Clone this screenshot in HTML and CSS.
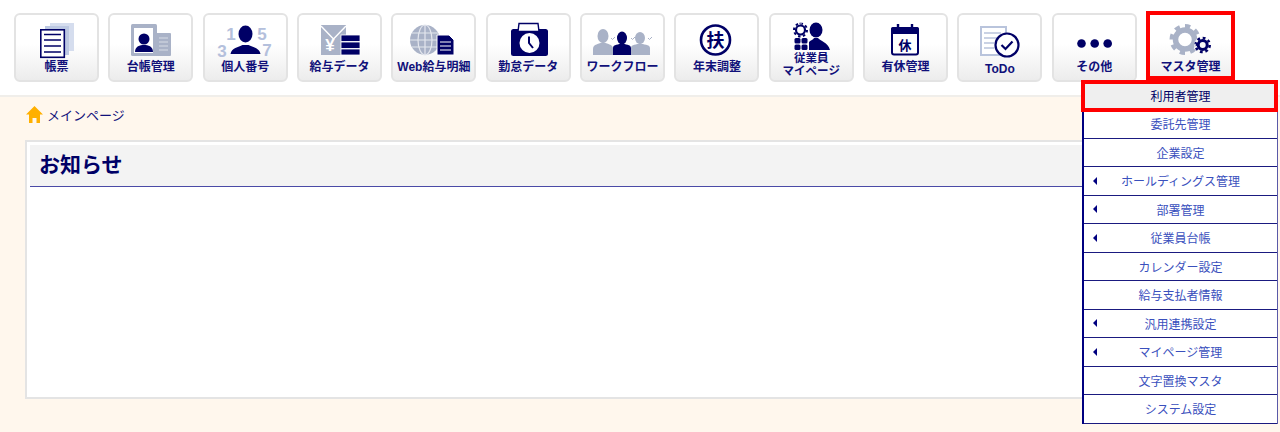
FILE: index.html
```html
<!DOCTYPE html>
<html lang="ja">
<head>
  <meta charset="UTF-8" />
  <meta name="viewport" content="width=device-width, initial-scale=1.0"/>
  <title>メインページ</title>
  <link rel="stylesheet" href="styles.css">
</head>
<body>

  <header class="topbar">
    <a class="nav-btn">
      <svg class="nav-icon" viewBox="0 0 85 46">
        <rect x="36" y="10" width="24" height="28" fill="#d5ddee"/>
        <rect x="31" y="13" width="24" height="29" fill="#bcc8e2"/>
        <rect x="26.800" y="16.800" width="23.500" height="27.500" fill="#fff" stroke="#000066" stroke-width="1.600"/>
        <path d="M30 21.500h17M30 27h17M30 33h17M30 39h17" stroke="#000066" stroke-width="1.600"/>
      </svg>
      <span class="nav-label">帳票</span>
    </a>
    <a class="nav-btn">
      <svg class="nav-icon" viewBox="0 0 85 46">
        <rect x="47" y="20" width="16" height="23" rx="1" fill="#a9b2c7"/>
        <rect x="23" y="11" width="26" height="32" rx="1.500" fill="#a9b2c7"/>
        <rect x="26" y="15" width="19" height="25" fill="#fff"/>
        <circle cx="36" cy="26" r="5.500" fill="#000066"/>
        <path d="M27 39c0-6 5-7 9-7s9 1 9 7z" fill="#000066"/>
        <path d="M51 25h9M51 29h9M51 33h9M51 37h9" stroke="#d7dce6" stroke-width="1.200"/>
      </svg>
      <span class="nav-label">台帳管理</span>
    </a>
    <a class="nav-btn">
      <svg class="nav-icon" viewBox="0 0 85 46">
        <ellipse cx="42.500" cy="21" rx="7" ry="8.500" fill="#000066"/>
        <path d="M27.500 41c1-6 8-7 12-9h6c4 2 11 3 12 9z" fill="#000066"/>
        <g class="digit">
          <text x="28" y="27">1</text>
          <text x="59" y="27">5</text>
          <text x="19" y="43.500">3</text>
          <text x="64" y="43">7</text>
        </g>
      </svg>
      <span class="nav-label">個人番号</span>
    </a>
    <a class="nav-btn">
      <svg class="nav-icon" viewBox="0 0 85 46">
        <rect x="24" y="12" width="25" height="30" fill="#a9b2c7"/>
        <path d="M24 13l12.500 13L49 13" fill="none" stroke="#fff" stroke-width="1.400"/>
        <text class="yen" x="33" y="38">¥</text>
        <g fill="#000066" stroke="#fff" stroke-width=".8">
          <rect x="44" y="22" width="19" height="6.500"/>
          <rect x="44" y="29" width="19" height="6.500"/>
          <rect x="44" y="36" width="19" height="6"/>
        </g>
      </svg>
      <span class="nav-label">給与データ</span>
    </a>
    <a class="nav-btn">
      <svg class="nav-icon" viewBox="0 0 85 46">
        <circle cx="34" cy="27" r="15" fill="#a9b2c7"/>
        <g fill="none" stroke="#e4e7ee" stroke-width="1.200">
          <ellipse cx="34" cy="27" rx="7" ry="15"/>
          <path d="M34 12v30M19 27h30M21 20h26M21 34h26"/>
        </g>
        <path d="M46 22h12l5 5v15H46z" fill="#000066" stroke="#fff"/>
        <path d="M49 29h11M49 33h11M49 37h11" stroke="#fff"/>
      </svg>
      <span class="nav-label">Web給与明細</span>
    </a>
    <a class="nav-btn">
      <svg class="nav-icon" viewBox="0 0 85 46">
        <rect x="25" y="16" width="37" height="27" rx="2.500" fill="#000066"/>
        <path d="M33 10.500h19l1 8H32z" fill="#fff" stroke="#000066" stroke-width="1.400"/>
        <circle cx="43.500" cy="30" r="10" fill="#fff"/>
        <path d="M43 23.500V30l4 5" fill="none" stroke="#000066" stroke-width="2"/>
      </svg>
      <span class="nav-label">勤怠データ</span>
    </a>
    <a class="nav-btn">
      <svg class="nav-icon" viewBox="0 0 85 46">
        <g fill="#a9b2c7">
          <ellipse cx="23" cy="23" rx="5.500" ry="7"/>
          <path d="M13 42v-6c0-5 6-5 10-7 4 2 10 2 10 7v6z"/>
          <ellipse cx="60" cy="25" rx="5" ry="6"/>
          <path d="M51 42v-7c0-4 6-3 9-5 3 2 10 1 10 5v7z"/>
        </g>
        <ellipse cx="42" cy="25" rx="5" ry="6.500" fill="#000066"/>
        <path d="M33 42v-7c0-4 6-3 9-5 3 2 9 1 9 5v7z" fill="#000066"/>
        <path d="M31 25l1.500 1.500 2.500-2.500M51 25l1.500 1.500 2.500-2.500M68 25l1.500 1.500 2.500-2.500" fill="none" stroke="#a9b2c7"/>
      </svg>
      <span class="nav-label">ワークフロー</span>
    </a>
    <a class="nav-btn">
      <svg class="nav-icon" viewBox="0 0 85 46">
        <circle cx="41.500" cy="27" r="14.500" fill="#fff" stroke="#000066" stroke-width="2.600"/>
        <text class="kanji" x="41.500" y="33.500" font-size="18">扶</text>
      </svg>
      <span class="nav-label">年末調整</span>
    </a>
    <a class="nav-btn nav-btn-tall">
      <svg class="nav-icon" viewBox="0 0 85 39">
        <circle cx="31.500" cy="17" r="4.500" fill="none" stroke="#000066" stroke-width="2.200"/>
        <circle cx="31.500" cy="17" r="6.500" fill="none" stroke="#000066" stroke-width="2" pathLength="16" stroke-dasharray="1 1"/>
        <g fill="#000066">
          <rect x="25.500" y="25" width="6" height="5.500" rx="1.500"/>
          <rect x="32.500" y="25" width="6" height="5.500" rx="1.500"/>
          <rect x="25.500" y="31.500" width="6" height="5.500" rx="1.500"/>
          <rect x="32.500" y="31.500" width="6" height="5.500" rx="1.500"/>
          <ellipse cx="47" cy="17" rx="6.500" ry="7.500"/>
          <path d="M40 37V29c2-2 4-2 5-4h4c2 3 10 4 12 12z"/>
        </g>
      </svg>
      <span class="nav-label nav-label-small">従業員<br>マイページ</span>
    </a>
    <a class="nav-btn">
      <svg class="nav-icon" viewBox="0 0 85 46">
        <rect x="29" y="15" width="26" height="26.500" rx="2" fill="#fff" stroke="#000066" stroke-width="2"/>
        <path d="M28 21v-5a2 2 0 0 1 2-2h24a2 2 0 0 1 2 2v5z" fill="#000066"/>
        <path d="M35 11v5M49 11v5" stroke="#000066" stroke-width="2.400"/>
        <text class="kanji" x="42" y="37" font-size="13">休</text>
      </svg>
      <span class="nav-label">有休管理</span>
    </a>
    <a class="nav-btn">
      <svg class="nav-icon" viewBox="0 0 85 46">
        <rect x="24" y="14" width="25" height="28" fill="#fff" stroke="#b9c4dc" stroke-width="2"/>
        <path d="M27 20h17M27 25h14M27 30h10M27 35h10" stroke="#b9c4dc" stroke-width="1.600"/>
        <circle cx="50" cy="32" r="11.500" fill="#fff" stroke="#000066" stroke-width="2.200"/>
        <path d="M44.500 32l4 4 7-7.500" fill="none" stroke="#000066" stroke-width="2.200"/>
      </svg>
      <span class="nav-label nav-label-low">ToDo</span>
    </a>
    <a class="nav-btn">
      <svg class="nav-icon" viewBox="0 0 85 46">
        <g fill="#000066">
          <circle cx="29.500" cy="30.500" r="4.300"/>
          <circle cx="42.700" cy="30.500" r="4.300"/>
          <circle cx="55.700" cy="30.500" r="4.300"/>
        </g>
      </svg>
      <span class="nav-label">その他</span>
    </a>
    <a class="nav-btn nav-btn-marked">
      <svg class="nav-icon" viewBox="0 0 81 44">
        <circle cx="35" cy="24.500" r="9.500" fill="none" stroke="#a9b2c7" stroke-width="5.500"/>
        <circle cx="35" cy="24.500" r="13.500" fill="none" stroke="#a9b2c7" stroke-width="4" pathLength="16" stroke-dasharray="1 1"/>
        <circle cx="52.700" cy="30" r="8.500" fill="#f9f9f9"/>
        <circle cx="52.700" cy="30" r="4.500" fill="none" stroke="#000066" stroke-width="3"/>
        <circle cx="52.700" cy="30" r="7" fill="none" stroke="#000066" stroke-width="2.600" pathLength="16" stroke-dasharray="1 1"/>
      </svg>
      <span class="nav-label">マスタ管理</span>
    </a>
  </header>

  <ul class="menu">
    <li class="menu-item menu-item-marked">利用者管理</li>
    <li class="menu-item">委託先管理</li>
    <li class="menu-item">企業設定</li>
    <li class="menu-item has-sub">ホールディングス管理</li>
    <li class="menu-item has-sub">部署管理</li>
    <li class="menu-item has-sub">従業員台帳</li>
    <li class="menu-item">カレンダー設定</li>
    <li class="menu-item">給与支払者情報</li>
    <li class="menu-item has-sub">汎用連携設定</li>
    <li class="menu-item has-sub">マイページ管理</li>
    <li class="menu-item">文字置換マスタ</li>
    <li class="menu-item">システム設定</li>
  </ul>

  <main class="content">
    <div class="breadcrumb">
      <svg class="home-icon" viewBox="0 0 17 17">
        <path d="M8.500 0L17 8.500h-3V17h-3.500v-5h-4v5H3V8.500H0z" fill="#ffb000"/>
      </svg>
      <span>メインページ</span>
    </div>

    <section class="panel">
      <h2 class="panel-title">お知らせ</h2>
    </section>
  </main>

</body>
</html>
```

FILE: styles.css
```css
* { box-sizing: border-box; }

body {
  margin: 0;
  min-height: 100vh;
  display: flex;
  flex-direction: column;
  font-family: 'Liberation Sans', 'Noto Sans CJK JP', sans-serif;
  background: #fff7ed;
  color: #000066;
}

.topbar {
  height: 97px;
  padding: 13px 0 0 14px;
  display: flex;
  align-items: flex-start;
  gap: 9.35px;
  background: #fff;
  border-bottom: 2px solid #f0eeea;
}

.nav-btn {
  width: 85px;
  height: 69px;
  flex: none;
  display: flex;
  flex-direction: column;
  align-items: center;
  border: 2px solid #e3e3e3;
  border-radius: 6px;
  background: linear-gradient(#fff 45%, #ececec);
}

.nav-icon {
  display: block;
  flex: none;
  width: 85px;
  height: 46px;
  margin-top: -2px;
  overflow: visible;
}

.nav-btn-tall .nav-icon { height: 39px; }

.nav-label {
  margin-top: 1px;
  font-size: 12px;
  font-weight: bold;
  line-height: 14px;
  white-space: nowrap;
  color: #10107a;
}

.nav-label-small {
  margin-top: 0;
  font-size: 11.5px;
  line-height: 13px;
  text-align: center;
}

.nav-label-low {
  margin-top: 3px;
}

.nav-btn-marked {
  width: 89px;
  height: 69px;
  margin-top: -2px;
  border: 4px solid #f00;
  border-radius: 0;
  background: linear-gradient(#fff 45%, #efefef);
}

.nav-btn-marked .nav-icon {
  width: 81px;
  height: 44px;
  margin-top: 0;
}

.digit text {
  font-size: 17px;
  font-weight: bold;
  fill: #b4c0dc;
  text-anchor: middle;
}

.yen {
  font-size: 17px;
  font-weight: bold;
  fill: #fff;
  text-anchor: middle;
}

.kanji {
  font-weight: bold;
  fill: #000066;
  text-anchor: middle;
}

/* dropdown over the page */
.menu {
  position: absolute;
  top: 81.5px;
  left: 1082px;
  width: 196px;
  margin: 0;
  padding: 0;
  list-style: none;
  background: #fff;
  border-left: 2px solid #000080;
  border-right: 1px solid #5a5aa8;
}

.menu-item {
  position: relative;
  height: 28.5px;
  display: flex;
  align-items: center;
  justify-content: center;
  font-size: 12px;
  color: #3a50bd;
  border-bottom: 1px solid #1a1a80;
}

.menu-item-marked {
  background: #efefef;
  color: #000066;
}

.menu-item-marked::after {
  content: '';
  position: absolute;
  inset: -1.5px -1px -3px -3px;
  border: 4px solid #f00;
}

.has-sub::before {
  content: '';
  position: absolute;
  left: 9px;
  top: 50%;
  margin-top: -4px;
  border-style: solid;
  border-width: 4px 4px 4px 0;
  border-color: transparent #000080 transparent transparent;
}

.content {
  flex: 1;
  padding: 8px 26px 0 25px;
}

.breadcrumb {
  display: flex;
  align-items: center;
  gap: 4px;
  height: 19px;
  padding-left: 1px;
  font-size: 13px;
  color: #10107a;
}

.home-icon {
  width: 17px;
  height: 17px;
}

.panel {
  height: 259px;
  margin-top: 16px;
  padding: 3px 2px 3px 3px;
  background: #fff;
  border: 2px solid #e4e4e4;
}

.panel-title {
  margin: 0;
  height: 42px;
  padding-left: 9px;
  line-height: 40px;
  font-size: 21px;
  font-weight: bold;
  background: #f3f3f3;
  border-bottom: 1px solid #4a4aa6;
}
```
